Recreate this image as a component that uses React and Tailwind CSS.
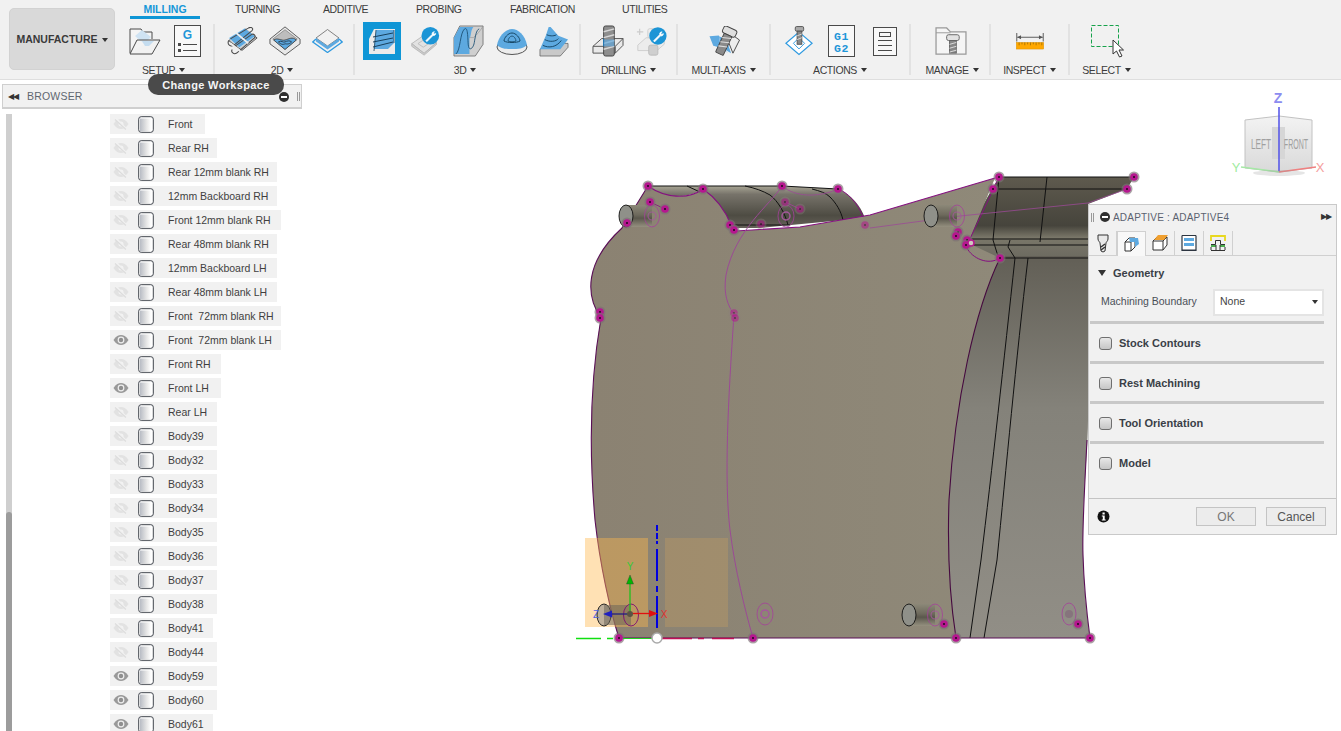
import React from "react";

const F = { fontFamily: '"Liberation Sans", Arial, sans-serif' };
const B = "#5da9e0";
const D = "#4a4a4a";

const Caret = () => <span className="inline-block ml-[4px] w-0 h-0 border-x-[3px] border-x-transparent border-t-[4px] border-t-[#333] align-[2px]" />;

const IconFolder = () => (
  <svg width="32" height="27" viewBox="0 0 32 27">
    <path d="M1 25V1h11l2 3h9v7" fill="#f4f4f4" stroke={D} strokeWidth="1" />
    <path d="M6 8l7-6 9 7-7 7z" fill="#cfe3f3" />
    <path d="M1 26L8 12h23l-8 14z" fill="#f2f2f2" fillOpacity=".6" stroke={D} strokeWidth="1" />
    <path d="M13 13h12l-5 5h-4z" fill="#c4dcef" />
  </svg>
);
const IconG = () => (
  <svg width="27" height="32" viewBox="0 0 27 32">
    <rect x=".5" y=".5" width="26" height="31" fill="#f8f8f8" stroke={D} />
    <text x="13.500" y="14" textAnchor="middle" fontSize="12" fontWeight="700" fill="#1f96d8" style={F}>G</text>
    <rect x="4" y="18" width="3" height="3" fill={D} />
    <rect x="4" y="24" width="3" height="3" fill={D} />
    <path d="M9 19.500h14M9 25.500h14" stroke={D} />
  </svg>
);
const Icon2dAdaptive = () => (
  <svg width="32" height="29" viewBox="0 0 36 32">
    <path d="M3 15L22 2l13 10-17 14z" fill="#c8c8c8" stroke={D} />
    <path d="M3 12L21 1l12 9-18 13z" fill={B} stroke="#fff" strokeWidth=".5" />
    <path d="M3 15c-2 4 2 8 6 5L29 4c3-3-1-5-4-3L5 13" fill="none" stroke={D} strokeWidth="1.200" />
    <path d="M7 25c-2 3 2 6 5 4L32 12c2-3-1-5-3-4L9 22" fill="none" stroke={D} strokeWidth="1.200" />
    <path d="M11 6l14 12M5 18l12 10" stroke="#eee" strokeWidth="2" />
  </svg>
);
const Icon2dPocket = () => (
  <svg width="32" height="32" viewBox="0 0 34 32">
    <path d="M17 1l16 13v5L17 31 1 19v-5z" fill="#e8e8e8" stroke="#555" />
    <path d="M17 4l13 10-13 11L4 14z" fill="#bdbdbd" stroke="#777" strokeWidth=".7" />
    <path d="M5 15c4-3 8 1 12 0s8-4 12 0l-12 10z" fill={B} stroke="#333" strokeWidth=".8" />
    <path d="M10 17c3-2 5 1 7 0 2-1 5-2 7 0-3 3-5 2-7 2-2 1-4 1-7-2z" fill="none" stroke="#234" strokeWidth=".9" />
  </svg>
);
const Icon2dFace = () => (
  <svg width="31" height="24" viewBox="0 0 31 24">
    <path d="M15.500 .5L27 9 15.500 17 4 9z" fill="#f1f1f1" stroke="#666" strokeWidth=".8" />
    <path d="M4 9l11.500 8L27 9v3.500L15.500 20.500 4 12.500z" fill={B} />
    <path d="M4 10L.8 13 15.500 23.500 30.200 13 27 10" fill="none" stroke="#2f9ae0" strokeWidth="1.300" />
  </svg>
);
const IconSelected = () => (
  <div className="w-[38px] h-[38px] bg-[#0f96d6] flex items-center justify-center">
    <svg width="28" height="28" viewBox="0 0 28 28">
      <path d="M1 12L6 2h21v25H1z" fill="#ebebeb" />
      <path d="M8 3h18v13l-6 6H6z" fill={B} />
      <path d="M5 10L25 6M5 15L25 11M5 20L25 15" stroke="#18405c" strokeWidth="1" />
      <path d="M8 3L6 24M26 3v13" stroke="#18405c" strokeWidth=".8" />
    </svg>
  </div>
);
const Wrench = ({ x, y, r = 9 }) => (
  <g>
    <circle cx={x} cy={y} r={r} fill="#1c95d6" />
    <path d={`M${x - r * .5} ${y + r * .55}l${r * .7} -${r * .7}c-.4 -1.800 .9 -3.200 2.800 -3.100l-1.300 1.600 .9 1.200 1.700 -.9c.3 1.700 -1.300 3 -3 2.500l-${r * .7} ${r * .7}z`} fill="#fff" stroke="#fff" strokeWidth=".7" />
  </g>
);
const IconToolpath = () => (
  <svg width="30" height="30" viewBox="0 0 34 34">
    <path d="M2 20L15 11l15 8-14 12z" fill="#e2e2e2" stroke="#b5b5b5" />
    <path d="M2 20v3l14 10 14-12v-2L16 31z" fill="#cfcfcf" stroke="#b5b5b5" />
    <path d="M9 20l6-4 6 4-6 4z" fill="none" stroke="#bbb" />
    <Wrench x={23} y={11} r={10} />
  </svg>
);
const IconFlow = () => (
  <svg width="33" height="32" viewBox="0 0 34 33">
    <path d="M8 1h24v19L24 32H2V13z" fill="#cfcfcf" stroke="#666" strokeWidth=".8" />
    <path d="M2 13h14l6 0c3-2 8-8 10-12" fill="none" stroke="#999" strokeWidth=".7" />
    <path d="M2 13L8 2h14c-3 4-2 9-4 12v16H2z" fill={B} />
    <path d="M4 30C9 26 8 8 13 4c4-3 3 14 4 18 1 5 5 2 6-4 1-6 2-13 5-14" fill="none" stroke="#1a4e72" strokeWidth=".9" />
  </svg>
);
const IconDome = () => (
  <svg width="32" height="27" viewBox="0 0 32 27">
    <ellipse cx="16" cy="19" rx="15" ry="7.500" fill="#ededed" stroke="#555" />
    <path d="M1 17C3 7 10 1 16 1s13 6 15 16c-4 4-9 4-15 4S5 21 1 17z" fill={B} />
    <path d="M16 5c4 0 8 5 8 8-3 2-13 2-16 0 0-3 4-8 8-8z" fill="none" stroke="#174766" strokeWidth="1" />
    <path d="M16 8c2 0 4 3 4 5-2 1-6 1-8 0 0-2 2-5 4-5z" fill="none" stroke="#174766" strokeWidth=".8" />
  </svg>
);
const IconTower = () => (
  <svg width="30" height="31" viewBox="0 0 31 32">
    <path d="M1 24L9 18h21v4l-8 9H1z" fill="#c9c9c9" stroke="#555" strokeWidth=".7" />
    <path d="M1 24h21l8-10-10-4-8-9H10L7 10z" fill={B} />
    <path d="M8 9c4 2 9 1 10 0M6 14c5 3 12 2 14-1M4 20c6 3 14 2 19-5" fill="none" stroke="#174766" strokeWidth="1" />
  </svg>
);
const IconDrill = () => (
  <svg width="32" height="32" viewBox="0 0 33 33">
    <path d="M1 22l9-8h22v7l-8 8H1z" fill="#e9e9e9" stroke="#555" />
    <path d="M1 22h23l8-8M24 22v7" fill="none" stroke="#555" />
    <rect x="12" y="1" width="11" height="31" rx="2" fill="#8e8e8e" stroke="#444" />
    <path d="M12 7l11-3M12 13l11-3M12 19l11-3M12 25l11-3" stroke="#d7d7d7" strokeWidth="1.500" />
    <path d="M12 15h11v7H12z" fill={B} fillOpacity=".65" />
    <path d="M12 14v8" stroke="#1c78ba" />
  </svg>
);
const IconDrillTool = () => (
  <svg width="31" height="32" viewBox="0 0 34 33">
    <path d="M4 3v7M1 6.500h7" stroke="#ccc" strokeWidth="1.300" />
    <path d="M2 21l9-8h20v7l-8 7H2z" fill="#ececec" stroke="#ccc" />
    <rect x="13" y="3" width="10" height="10" rx="2" fill="#eee" stroke="#ccc" />
    <rect x="14" y="21" width="10" height="11" rx="2" fill="#cfcfcf" stroke="#bbb" />
    <Wrench x={24} y={11} r={9.500} />
  </svg>
);
const IconMulti = () => (
  <svg width="33" height="30" viewBox="0 0 34 32">
    <path d="M1 11l10-1 2 12 8 7-9-6-7-2z" fill={B} />
    <path d="M20 14l6-4 7 5-7 14z" fill="#ededed" stroke="#444" />
    <path d="M11 11l8 3 5 15-10-6z" fill={B} />
    <g transform="rotate(25 16 14)">
      <rect x="11" y="0" width="15" height="8" rx="2.500" fill="#dedede" stroke="#444" />
      <rect x="14" y="8" width="9" height="22" rx="1" fill="#8a8a8a" stroke="#444" />
      <path d="M14 13l9-3M14 18l9-3M14 23l9-3" stroke="#ddd" strokeWidth="1.300" />
    </g>
  </svg>
);
const IconAction = () => (
  <svg width="28" height="32" viewBox="0 0 30 33">
    <path d="M15 7L29 19 15 31 1 19z" fill="#fff" stroke="#2f9ae0" strokeWidth="1.300" />
    <path d="M15 13l6 6-6 6-6-6z" fill="none" stroke="#2f9ae0" />
    <rect x="11" y="1" width="9" height="5" rx="1.500" fill="#aaa" stroke="#555" />
    <rect x="13" y="6" width="5" height="14" fill="#888" stroke="#555" />
    <path d="M13 11l5-2M13 15l5-2" stroke="#ddd" />
  </svg>
);
const IconG1 = () => (
  <svg width="27" height="32" viewBox="0 0 27 32">
    <rect x=".5" y=".5" width="26" height="31" fill="#f8f8f8" stroke={D} />
    <text x="13.500" y="14.500" textAnchor="middle" fontSize="11.500" fontWeight="700" fill="#1f96d8" letterSpacing=".5" style={{ fontFamily: '"Liberation Mono", monospace' }}>G1</text>
    <text x="13.500" y="26.500" textAnchor="middle" fontSize="11.500" fontWeight="700" fill="#1f96d8" letterSpacing=".5" style={{ fontFamily: '"Liberation Mono", monospace' }}>G2</text>
  </svg>
);
const IconSheet = () => (
  <svg width="24" height="29" viewBox="0 0 24 29">
    <rect x=".5" y=".5" width="23" height="28" fill="#f8f8f8" stroke={D} />
    <rect x="6.500" y="5.500" width="11" height="4" fill="none" stroke={D} />
    <path d="M5 13.500h14M5 18.500h14M5 23.500h14" stroke={D} />
  </svg>
);
const IconManage = () => (
  <svg width="32" height="28" viewBox="0 0 33 29">
    <path d="M1 1h11l4 4h16v23H1z" fill="#f5f5f5" stroke="#999" strokeWidth="1.300" />
    <path d="M1 6h15" stroke="#999" />
    <rect x="12" y="8" width="13" height="6" rx="2" fill="#e2e2e2" stroke="#666" />
    <rect x="15" y="14" width="7" height="13" fill="#888" stroke="#666" />
    <path d="M15 18l7-2M15 22l7-2M15 26l7-2" stroke="#ddd" />
  </svg>
);
const IconInspect = () => (
  <svg width="28" height="17" viewBox="0 0 29 18" className="mt-[1px]">
    <path d="M.5 0v9M28.500 0v9" stroke="#555" />
    <path d="M1 4.500h27" stroke="#555" />
    <path d="M1 4.500l4-2v4zM28 4.500l-4-2v4z" fill="#555" />
    <rect x="0" y="10" width="29" height="7" fill="#ffa800" stroke="#d98e00" strokeWidth=".5" />
    <path d="M3 10v3M6 10v2M9 10v3M12 10v2M15 10v3M18 10v2M21 10v3M24 10v2M27 10v3" stroke="#8a6000" strokeWidth=".7" />
  </svg>
);
const IconSelect = () => (
  <svg width="33" height="33" viewBox="0 0 33 33">
    <rect x=".5" y=".5" width="27" height="21" fill="none" stroke="#17a24b" strokeDasharray="4 2" />
    <path d="M22 15v14l3.500-3 3 6 2.500-1-3-6h4.500z" fill="#fff" stroke="#333" />
  </svg>
);

const Group = ({ w, label, items, row, lab = "" }) => (
  <div className={`flex flex-col shrink-0 ${w}`}>
    <div className={`h-[40px] flex items-center ${row}`}>{items}</div>
    <div className={`text-[#3c3c3c] text-[10.500px] tracking-[-.4px] leading-[13px] mt-[3px] whitespace-nowrap text-center ${lab}`}>{label}<Caret /></div>
  </div>
);
const Divider = () => <div className="w-[2px] h-[51px] mt-[3px] bg-[#e2e2e2] shrink-0" />;

const Tab = ({ children, className }) => <span className={`text-[10.500px] tracking-[-.4px] leading-[13px] text-[#3c3c3c] shrink-0 ${className}`}>{children}</span>;

const rows = [
  ["Front", 0, 95], ["Rear RH", 0, 107], ["Rear 12mm blank RH", 0, 167], ["12mm Backboard RH", 0, 167], ["Front 12mm blank RH", 0, 171],
  ["Rear 48mm blank RH", 0, 167], ["12mm Backboard LH", 0, 167], ["Rear 48mm blank LH", 0, 167], ["Front  72mm blank RH", 0, 171],
  ["Front  72mm blank LH", 1, 171], ["Front RH", 0, 111], ["Front LH", 1, 111], ["Rear LH", 0, 107], ["Body39", 0, 107], ["Body32", 0, 107], ["Body33", 0, 107],
  ["Body34", 0, 107], ["Body35", 0, 107], ["Body36", 0, 107], ["Body37", 0, 107], ["Body38", 0, 107], ["Body41", 0, 103], ["Body44", 0, 107], ["Body59", 1, 107], ["Body60", 1, 107], ["Body61", 1, 103],
];

const Eye = ({ on }) => (
  <svg width="16" height="12" viewBox="0 0 16 12">
    {on ? (
      <>
        <path d="M.5 6C3 2 5.500 1 8 1s5 1 7.500 5C13 10 10.500 11 8 11S3 10 .5 6z" fill="#999" />
        <circle cx="8" cy="6" r="3.400" fill="#eee" />
        <circle cx="8" cy="6" r="2.200" fill="#8f8f8f" />
      </>
    ) : (
      <>
        <path d="M.5 6C3 2 5.500 1 8 1s5 1 7.500 5C13 10 10.500 11 8 11S3 10 .5 6z" fill="#e2e2e2" />
        <circle cx="8" cy="6" r="2.500" fill="#f2f2f2" />
        <path d="M2.500 .5l11 11" stroke="#f2f2f2" strokeWidth="2.400" />
        <path d="M2 1.500l11 10" stroke="#dcdcdc" strokeWidth="1.100" />
      </>
    )}
  </svg>
);
const Cyl = () => (
  <svg width="16" height="17" viewBox="0 0 16 17">
    <defs>
      <linearGradient id="cy" x1="0" x2="1" y1="0" y2="0">
        <stop offset="0" stopColor="#b8bcc4" />
        <stop offset=".6" stopColor="#e6e6e6" />
        <stop offset="1" stopColor="#fff" />
      </linearGradient>
    </defs>
    <rect x=".7" y=".7" width="14.600" height="15.600" rx="2.500" fill="#fff" stroke="#40454d" strokeWidth="1" />
    <rect x="2" y="2.500" width="11" height="13" fill="url(#cy)" />
  </svg>
);

const Row = ({ name, on, w }) => (
  <div className="h-[20px] shrink-0 bg-[#f1f1f1] flex items-center pl-[3px] mb-[4px]" style={{ width: w }}>
    <span className="w-[16px] flex justify-center"><Eye on={on} /></span>
    <span className="ml-[9px] flex"><Cyl /></span>
    <span className="ml-[14px] text-[10.500px] leading-[13px] text-[#3f3f3f] whitespace-pre">{name}</span>
  </div>
);

const Node = ({ x, y, f }) => (
  <g opacity={f ? .55 : 1}>
    <circle cx={x} cy={y} r="5.500" fill={f ? "#8d7f80" : "#7d6f74"} fillOpacity=".65" />
    <circle cx={x} cy={y} r="3.800" fill="#b5178f" />
    <circle cx={x} cy={y} r="1" fill="#1c0b18" />
  </g>
);

const Peg = ({ x, y }) => (
  <g>
    <rect x={x} y={y - 11} width={26} height={22} fill="url(#peg)" />
    <ellipse cx={x} cy={y} rx="7" ry="11" fill="#8f9089" stroke="#111" strokeWidth=".9" />
    <ellipse cx={x + 26} cy={y} rx="7.500" ry="11" fill="none" stroke="#a5409a" strokeWidth=".8" />
    <circle cx={x + 26} cy={y} r="4" fill="none" stroke="#a5579c" strokeWidth="1.200" opacity=".8" />
  </g>
);

const Model = () => (
  <svg className="absolute left-0 top-0" width="1341" height="651" viewBox="0 80 1341 651">
    <defs>
      <linearGradient id="peg" x1="0" x2="0" y1="0" y2="1">
        <stop offset="0" stopColor="#8c8878" />
        <stop offset=".45" stopColor="#6d695c" />
        <stop offset=".6" stopColor="#5a574c" />
        <stop offset="1" stopColor="#95907f" />
      </linearGradient>
      <linearGradient id="top1" x1="0" x2="0" y1="0" y2="1">
        <stop offset="0" stopColor="#a8a594" />
        <stop offset=".2" stopColor="#77736a" />
        <stop offset=".7" stopColor="#4e4c43" />
        <stop offset="1" stopColor="#66625a" />
      </linearGradient>
      <linearGradient id="top2" x1="0" x2="0" y1="0" y2="1">
        <stop offset="0" stopColor="#5e5a4e" />
        <stop offset=".6" stopColor="#46443c" />
        <stop offset=".75" stopColor="#7a7769" />
        <stop offset="1" stopColor="#6c6a60" />
      </linearGradient>
      <linearGradient id="side2" x1="0" x2="0" y1="0" y2="1">
        <stop offset="0" stopColor="#625f56" />
        <stop offset=".4" stopColor="#84827a" />
        <stop offset="1" stopColor="#918e86" />
      </linearGradient>
      <linearGradient id="body" x1="0" x2="1" y1="0" y2="0">
        <stop offset="0" stopColor="#8b8272" />
        <stop offset="1" stopColor="#8f8979" />
      </linearGradient>
    </defs>
    <path d="M648 186H782L838 189C852 195 860 205 865 218L760 228H732L703 189C690 198 665 200 648 186Z" fill="url(#top1)" />
    <path d="M999 177H1134L1127 189L1088 204V258H1000L960 245Z" fill="url(#top2)" />
    <path d="M960 256H1088V420C1088 450 1082 500 1083 555C1084 590 1087 615 1090 638H940Z" fill="url(#side2)" />
    <path d="M648 186C665 198 688 200 703 189C716 198 726 212 731 225L736 231L800 227L870 215L995 178L968 243L1000 258C975 310 955 400 949 500C947 560 950 600 956 638H619C610 610 600 565 595 520C588 440 592 370 601 318C585 295 585 262 622 228Z" fill="url(#body)" />
    <path d="M648 186H782L838 189M687 186l13 6M745 186c10 2 18 5 25 9c8 6 15 18 18 30M812 189c8 2 14 4 18 8c6 6 11 14 13 23" fill="none" stroke="#111" strokeWidth="1" />
    <path d="M733 225H790" fill="none" stroke="#111" strokeWidth="1.100" />
    <path d="M999 177H1134M993 189H1127M968 239H1088M968 245H1088M1000 258H1088M1047 177l-7 65M999 177l-6 63L997 253L1000 258M1010 240l-2 7L1015 258M1015 258C1004 360 992 470 981 560L970 638M1028 258C1016 360 1006 470 997 560L984 638" fill="none" stroke="#111" strokeWidth="1" />
    <path d="M648 186C665 198 688 200 703 189C716 198 726 212 731 225L736 231L800 227L870 215L995 178" fill="none" stroke="#850f80" strokeWidth="1.100" />
    <path d="M838 189c9 3 20 14 25 28" fill="none" stroke="#850f80" strokeWidth="1" />
    <path d="M648 186L622 228C585 262 585 295 601 318C592 370 588 440 595 520C600 565 610 610 619 638H1090C1087 615 1084 590 1083 555C1082 530 1084 500 1087 440" fill="none" stroke="#5a0f57" strokeWidth="1.100" />
    <path d="M1000 258C975 310 955 400 949 500C947 560 950 600 956 638" fill="none" stroke="#45093f" strokeWidth="1.100" />
    <path d="M999 177L968 243M967 248C972 258 988 266 1000 258" fill="none" stroke="#850f80" strokeWidth="1" />
    <path d="M782 186C770 205 735 230 726 275C723 295 728 305 734 315C728 400 724 480 730 530C735 570 745 610 753 638" fill="none" stroke="#9b4a95" strokeWidth="1" />
    <path d="M782 186C795 197 818 198 838 189" fill="none" stroke="#9b4a95" strokeWidth=".8" />
    <path d="M870 228L960 216L1088 203L1127 189" fill="none" stroke="#9b4a95" strokeWidth=".8" />
    <Peg x={626} y={216} />
    <Peg x={931} y={216} />
    <Peg x={909} y={615} />
    <ellipse cx="765" cy="614" rx="8" ry="11" fill="none" stroke="#a5409a" strokeWidth=".8" />
    <circle cx="765" cy="614" r="4" fill="none" stroke="#a5579c" strokeWidth="1.500" />
    <ellipse cx="1069" cy="614" rx="7" ry="11" fill="none" stroke="#a5409a" strokeWidth=".8" />
    <circle cx="1069" cy="614" r="4" fill="#86747d" />
    <ellipse cx="786" cy="216" rx="8" ry="11" fill="none" stroke="#a5409a" strokeWidth=".8" />
    <circle cx="786" cy="216" r="4" fill="none" stroke="#a5579c" strokeWidth="1.500" />
    <path d="M785 202l15 7" stroke="#a5409a" strokeWidth=".8" />
    <path d="M650 202l15 7" stroke="#850f80" strokeWidth=".8" />
    {[[648,186],[703,189],[782,186],[838,189],[650,202],[665,209],[627,223],[730,225],[734,230],[999,177],[993,189],[1134,177],[1127,189],[1000,258],[967,240],[966,245],[958,232],[956,236],[600,312],[600,318],[619,638],[753,638],[956,638],[1090,638],[944,624],[1078,624]].map(([x,y],i)=><Node key={i} x={x} y={y} />)}
    <circle cx="971" cy="243" r="3" fill="#cfc8c0" stroke="#b5178f" strokeWidth="1.500" />
    {[[761,224],[785,202],[800,209],[865,225],[734,313],[735,318]].map(([x,y],i)=><Node key={i} x={x} y={y} f />)}
    <rect x="585" y="538" width="63" height="89" fill="#ffb84d" fillOpacity=".42" />
    <rect x="665" y="538" width="63" height="89" fill="#ffb84d" fillOpacity=".18" />
    <ellipse cx="604" cy="615" rx="7" ry="11" fill="#888" fillOpacity=".55" stroke="#111" strokeWidth=".9" />
    <rect x="604" y="605" width="27" height="20" fill="#6b665a" fillOpacity=".55" />
    <ellipse cx="631" cy="615" rx="7.500" ry="11" fill="none" stroke="#7c0a75" strokeWidth=".9" />
    <path d="M657 525V630" stroke="#0000e0" strokeWidth="2" strokeDasharray="6 2 6 2 3 5 32 5 6 4 32" />
    <path d="M630 613V583" stroke="#20c020" strokeWidth="1.300" />
    <path d="M630 575l-3.500 9h7z" fill="#00b800" stroke="#333" strokeWidth=".4" />
    <path d="M630 613.500H650" stroke="#e01010" strokeWidth="1.300" />
    <path d="M658 613.500l-9-3.500v7z" fill="#e01010" />
    <path d="M630 614H608" stroke="#202080" strokeWidth="1.300" />
    <path d="M603 614l9-3.500v7z" fill="#2020c0" />
    <circle cx="630" cy="614" r="3" fill="#5a5444" />
    <text x="630" y="570" fontSize="10" textAnchor="middle" fill="#38c838" style={F}>Y</text>
    <text x="664" y="618" fontSize="10" textAnchor="middle" fill="#e03030" style={F}>X</text>
    <text x="596" y="618" fontSize="10" textAnchor="middle" fill="#5060e0" style={F}>Z</text>
    <path d="M576 638.500H614" stroke="#10e010" strokeWidth="1.300" strokeDasharray="25 6 6 2" />
    <path d="M623 638.500H652" stroke="#20d020" strokeWidth="1" />
    <path d="M660 638.500H737" stroke="#c00f55" strokeWidth="1.300" strokeDasharray="32 6 6 8 22 3" />
    <circle cx="657" cy="638" r="5" fill="#fff" stroke="#aaa" strokeWidth="1.500" />
  </svg>
);

const ViewCube = () => (
  <svg className="absolute left-[1229px] top-[10px]" width="112" height="92" viewBox="1229 90 112 92">
    <defs>
      <linearGradient id="cube" x1="0" x2="0" y1="0" y2="1">
        <stop offset="0" stopColor="#f3f3f3" />
        <stop offset="1" stopColor="#d9d9d9" />
      </linearGradient>
    </defs>
    <path d="M1245 120L1279 116L1312 120V168L1279 172L1245 168Z" fill="url(#cube)" stroke="#c2c2c2" />
    <rect x="1272" y="127" width="13" height="32" fill="#d6d6d6" />
    <text transform="translate(1261 149) scale(.55 1)" fontSize="15" textAnchor="middle" fill="#a0a0a0" style={F}>LEFT</text>
    <text transform="translate(1296 149) scale(.47 1)" fontSize="15" textAnchor="middle" fill="#a0a0a0" style={F}>FRONT</text>
    <path d="M1279 107V172" stroke="#5050e8" strokeWidth="1.500" />
    <path d="M1241 167L1279 172" stroke="#a6e8a6" strokeWidth="1.500" />
    <path d="M1279 172L1316 167" stroke="#f08080" strokeWidth="1.500" />
    <ellipse cx="1279" cy="173" rx="26" ry="3" fill="#999" fillOpacity=".25" />
    <text x="1278" y="103" fontSize="14" fontWeight="700" textAnchor="middle" fill="#8c8cf0" style={F}>Z</text>
    <text x="1236" y="172" fontSize="13" textAnchor="middle" fill="#a0eca0" style={F}>Y</text>
    <text x="1320" y="172" fontSize="13" textAnchor="middle" fill="#f5a0a0" style={F}>X</text>
  </svg>
);

const Check = () => <span className="w-[13px] h-[13px] rounded-[3px] border border-[#6f6f6f] bg-gradient-to-b from-[#e8e8e8] to-[#c6c6c6] shrink-0" />;
const Sep = () => <div className="h-[3px] bg-[#c8c8c8] ml-[1px] mr-[12px]" />;

const Section = ({ label }) => (
  <div className="h-[37px] flex items-center pl-[10px] pt-[1px] gap-[7px]">
    <Check />
    <span className="text-[11px] font-bold text-[#3a3f47]">{label}</span>
  </div>
);

const TabBtn = ({ active, w = "w-[29px]", children }) => (
  <div className={`${w} flex items-center justify-center border-r border-[#d0d0d0] ${active ? "h-[25px] bg-[#f8f8f8] border-l border-t -mb-px z-10" : "h-[24px]"}`}>
    {children}
  </div>
);

const Dialog = () => (
  <div className="absolute left-[1088px] top-[124px] w-[249px] h-[331px] bg-[#f1f1f1] border border-[#c9c9c9] flex flex-col">
    <div className="h-[27px] shrink-0 flex items-center pl-[2px] pr-[3px] pb-[3px]">
      <span className="w-[3px] h-[9px] border-x border-[#999]" />
      <span className="ml-[6px] w-[10px] h-[10px] rounded-full bg-[#2f2f2f] flex items-center justify-center"><span className="w-[6px] h-[2px] bg-white" /></span>
      <span className="ml-[3px] text-[10px] text-[#5b6270] tracking-[.2px]">ADAPTIVE : ADAPTIVE4</span>
      <span className="ml-auto text-[8px] text-[#333] tracking-[-1px] pr-[2px]">▶▶</span>
    </div>
    <div className="flex border-b border-[#d0d0d0] h-[24px] shrink-0 items-end">
      <TabBtn w="w-[28px]">
        <svg width="12" height="19" viewBox="0 0 12 19"><path d="M1 1h10v4c0 2-2 3-2 4l-1 8-2 1-2-1-1-8C3 8 1 7 1 5z" fill="#e8e8e8" stroke="#333" /><path d="M4 13l4-3M4 16l4-3" stroke="#333" strokeWidth="1.500" /></svg>
      </TabBtn>
      <TabBtn active>
        <svg width="16" height="16" viewBox="0 0 16 16"><path d="M1 6L5 2h6v9l-4 4H1z" fill="#fff" stroke="#333" /><path d="M1 6h6v9M7 6l4-4" fill="none" stroke="#333" /><path d="M5 2h9l1 6-4 3V6H6z" fill="#5da9e0" /></svg>
      </TabBtn>
      <TabBtn>
        <svg width="16" height="16" viewBox="0 0 16 16"><path d="M1 6L5 2h10v8l-4 5H1z" fill="#fff" stroke="#333" /><path d="M1 6h10v9M11 6l4-4" fill="none" stroke="#333" /><path d="M2 5L6 0h10l-4 5z" fill="#f0a030" /></svg>
      </TabBtn>
      <TabBtn>
        <svg width="16" height="16" viewBox="0 0 16 16"><path d="M1 .5v15h14V.5" fill="#fff" stroke="#2c3540" strokeWidth="1.200" /><rect x="3" y="3" width="10" height="3" fill="#5da9e0" /><rect x="3" y="8" width="10" height="3" fill="#5da9e0" /><path d="M1 .5h14M1 15h14" stroke="#2c3540" /></svg>
      </TabBtn>
      <TabBtn>
        <svg width="16" height="16" viewBox="0 0 16 16"><path d="M1 6V1h14v5" fill="none" stroke="#e8d820" strokeWidth="1.800" /><path d="M1 9.500h4.500V5.500h5v4H15" fill="none" stroke="#333" /><path d="M1 11h5M10 11h5" stroke="#4caf50" strokeWidth="1.800" /><path d="M1 15.500h14M6 15V10M10 15V10M1 15v-3M15 15v-3" stroke="#333" /></svg>
      </TabBtn>
    </div>
    <div className="h-[28px] shrink-0 flex items-center pl-[9px] gap-[7px] mt-[3px]">
      <span className="w-0 h-0 border-x-[4px] border-x-transparent border-t-[6px] border-t-[#333]" />
      <span className="text-[11px] font-bold text-[#3a3f47]">Geometry</span>
    </div>
    <div className="h-[28px] shrink-0 flex items-center pl-[12px] mt-[1px]">
      <span className="text-[10.500px] text-[#4a4f57] w-[112px]">Machining Boundary</span>
      <div className="w-[111px] h-[27px] bg-white border-2 border-[#e4e4e4] flex items-center pl-[5px] pr-[2px] text-[10.500px] text-[#444]">
        None
        <span className="ml-auto mr-[2px] w-0 h-0 border-x-[3.500px] border-x-transparent border-t-[4px] border-t-[#333]" />
      </div>
    </div>
    <div className="mt-[5px]"><Sep /></div>
    <Section label="Stock Contours" />
    <Sep />
    <Section label="Rest Machining" />
    <Sep />
    <Section label="Tool Orientation" />
    <Sep />
    <Section label="Model" />
    <div className="mt-auto h-[36px] border-t border-[#c4c4c4] flex items-center pl-[8px] pr-[10px] gap-[10px]">
      <svg width="13" height="13" viewBox="0 0 13 13"><circle cx="6.500" cy="6.500" r="6" fill="#111" /><rect x="5.500" y="2.500" width="2.200" height="2" fill="#fff" /><path d="M4.800 5.500h2.900v4h1v1H4.800v-1h1v-3h-1z" fill="#fff" /></svg>
      <button className="ml-auto w-[60px] h-[19px] border border-[#c4c4c4] bg-[#ececec] text-[12px] leading-none text-[#777]">OK</button>
      <button className="w-[60px] h-[19px] border border-[#c4c4c4] bg-[#ececec] text-[12px] leading-none text-[#555]">Cancel</button>
    </div>
  </div>
);

export default function App() {
  return (
    <div className="w-[1341px] h-[731px] overflow-hidden bg-white flex flex-col" style={F}>
      <header className="h-[80px] shrink-0 bg-[#f1f1f1] border-b border-[#dedede] flex relative">
        <div className="w-[122px] shrink-0 pl-[9px] pt-[8px]">
          <div className="w-[106px] h-[62px] rounded-[5px] bg-[#d9d9d9] border border-[#d2d2d2] flex items-center justify-center pt-[1px] text-[10.500px] font-bold text-[#3a3a3a]">
            MANUFACTURE<Caret />
          </div>
        </div>
        <div className="flex flex-col flex-1 min-w-0">
          <div className="h-[21px] shrink-0 flex items-start">
            <div className="w-[70px] ml-[8px] mt-[2px] pt-[1px] h-[17px] border-b-[3px] border-[#0f96d6] text-center shrink-0">
              <span className="text-[10.500px] leading-[13px] font-bold text-[#1597d8] block">MILLING</span>
            </div>
            <Tab className="ml-[35px] w-[88px] mt-[3px]">TURNING</Tab>
            <Tab className="w-[93px] mt-[3px]">ADDITIVE</Tab>
            <Tab className="w-[94px] mt-[3px]">PROBING</Tab>
            <Tab className="w-[112px] mt-[3px]">FABRICATION</Tab>
            <Tab className="mt-[3px]">UTILITIES</Tab>
          </div>
          <div className="flex h-[58px]">
            <Group w="w-[91px]" label="SETUP" lab="-ml-[8px]" row="pl-[7px] gap-[13px]" items={<><IconFolder /><IconG /></>} />
            <Divider />
            <Group w="w-[138px]" label="2D" lab="-ml-[4px]" row="pl-[11px] gap-[11px]" items={<><Icon2dAdaptive /><Icon2dPocket /><Icon2dFace /></>} />
            <Divider />
            <Group w="w-[224px]" label="3D" lab="-ml-[4px]" row="pl-[8px] gap-[11px]" items={<><IconSelected /><div className="-ml-[2px] flex"><IconToolpath /></div><div className="ml-[1px] flex"><IconFlow /></div><IconDome /><IconTower /></>} />
            <Divider />
            <Group w="w-[95px]" label="DRILLING" row="pl-[11px] gap-[12px]" items={<><IconDrill /><IconDrillTool /></>} />
            <Divider />
            <Group w="w-[91px]" label="MULTI-AXIS" row="pl-[30px]" items={<IconMulti />} />
            <Divider />
            <Group w="w-[138px]" label="ACTIONS" row="pl-[14px] gap-[15px]" items={<><IconAction /><IconG1 /><div className="ml-[3px] flex"><IconSheet /></div></>} />
            <Divider />
            <Group w="w-[78px]" label="MANAGE" lab="ml-[4px]" row="pl-[24px]" items={<IconManage />} />
            <Divider />
            <Group w="w-[77px]" label="INSPECT" row="pl-[25px]" items={<IconInspect />} />
            <Divider />
            <Group w="w-[78px]" label="SELECT" lab="-ml-[5px]" row="pl-[21px]" items={<IconSelect />} />
          </div>
        </div>
      </header>

      <main className="flex-1 relative min-h-0 overflow-hidden">
        <Model />
        <ViewCube />
        <aside className="relative w-[304px] h-full flex flex-col pt-[4px] pl-[2px]">
          <div className="h-[25px] w-[300px] shrink-0 bg-[#f1f1f1] border border-[#cfcfcf] border-b-2 flex items-center pl-[5px] pt-[1px]">
            <span className="text-[8px] text-[#333] tracking-[-1px]">◀◀</span>
            <span className="ml-[9px] text-[10.500px] text-[#5f6670] tracking-[.2px]">BROWSER</span>
            <span className="ml-auto w-[10px] h-[10px] rounded-full bg-[#2f2f2f] flex items-center justify-center"><span className="w-[6px] h-[2px] bg-white" /></span>
            <span className="ml-[8px] mr-[1px] w-[3px] h-[9px] border-x border-[#999]" />
          </div>
          <div className="flex-1 flex min-h-0 mt-[5px] pl-[4px]">
            <div className="w-[6px] h-full bg-[#cfcfcf] flex flex-col shrink-0">
              <div className="h-[398px] shrink-0" />
              <div className="flex-1 bg-[#9c9c9c] rounded-t-[3px]" />
            </div>
            <div className="ml-[98px] flex flex-col">
              {rows.map(([n, on, w]) => <Row key={n} name={n} on={!!on} w={w} />)}
            </div>
          </div>
        </aside>
        <Dialog />
      </main>

      <div className="absolute left-[148px] top-[74px] h-[21px] w-[136px] rounded-[10px] bg-[#4a4a4a] text-[#f5f5f5] text-[11px] tracking-[.35px] font-bold flex items-center justify-center pt-[1px]">Change Workspace</div>
    </div>
  );
}
